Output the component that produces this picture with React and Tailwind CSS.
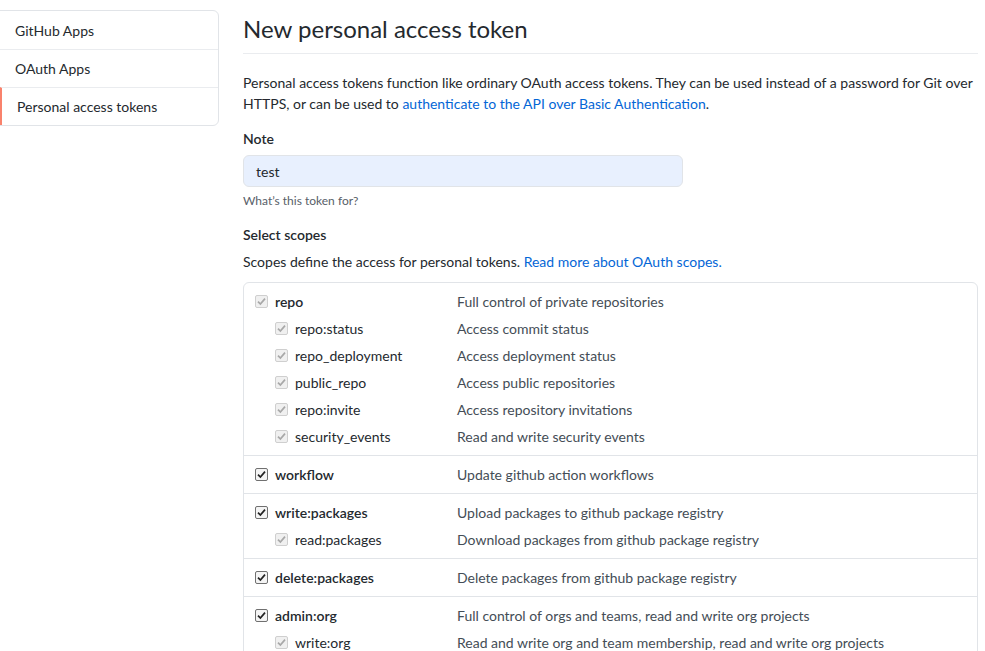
import React from "react";

const scopeGroups = [
  {
    items: [
      { name: "repo", desc: "Full control of private repositories", top: true, disabled: true },
      { name: "repo:status", desc: "Access commit status" },
      { name: "repo_deployment", desc: "Access deployment status" },
      { name: "public_repo", desc: "Access public repositories" },
      { name: "repo:invite", desc: "Access repository invitations" },
      { name: "security_events", desc: "Read and write security events" },
    ],
  },
  { items: [{ name: "workflow", desc: "Update github action workflows", top: true }] },
  {
    items: [
      { name: "write:packages", desc: "Upload packages to github package registry", top: true },
      { name: "read:packages", desc: "Download packages from github package registry" },
    ],
  },
  { items: [{ name: "delete:packages", desc: "Delete packages from github package registry", top: true }] },
  {
    items: [
      { name: "admin:org", desc: "Full control of orgs and teams, read and write org projects", top: true },
      { name: "write:org", desc: "Read and write org and team membership, read and write org projects" },
      { name: "read:org", desc: "Read org and team membership, read org projects" },
    ],
  },
];

function Checkbox({ disabled }) {
  return (
    <span
      className={
        "flex h-[13px] w-[13px] shrink-0 items-center justify-center rounded-[2px] border " +
        (disabled ? "border-[#cfcfcf] bg-[#f0f0f0]" : "border-[#707070] bg-[#f4f4f4]")
      }
    >
      <svg width="9" height="9" viewBox="0 0 9 9">
        <path
          d="M1 4.6 L3.4 7 L8 1.6"
          fill="none"
          stroke={disabled ? "#a8a8a8" : "#222"}
          strokeWidth="1.7"
        />
      </svg>
    </span>
  );
}

export default function App() {
  const menu = ["GitHub Apps", "OAuth Apps", "Personal access tokens"];

  return (
    <div
      className="flex h-[651px] overflow-hidden bg-white text-[14px] text-[#24292e]"
      style={{ fontFamily: 'Lato, "Open Sans", sans-serif' }}
    >
      <div className="w-[243px] shrink-0 pt-[10px]">
        <nav className="ml-[-1px] w-[220px] rounded-r-[6px] border border-[#e1e4e8]">
          {menu.map((label, i) => (
            <div
              key={label}
              className={
                "flex h-[38px] items-center pl-[15px] " +
                (i > 0 ? "border-t border-[#eaecef] " : "") +
                (i === 2 ? "border-l-2 border-l-[#f9826c] pl-[13px]" : "")
              }
            >
              {label}
            </div>
          ))}
        </nav>
      </div>

      <main className="w-[735px] shrink-0">
        <h1 className="mt-[13px] border-b border-[#eaecef] pb-[8px] text-[24px] leading-[32px] font-normal">
          New personal access token
        </h1>

        <p className="mt-[18px] leading-[21px]">
          Personal access tokens function like ordinary OAuth access tokens. They can be used instead of a
          password for Git over HTTPS, or can be used to{" "}
          <a className="text-[#0366d6]">authenticate to the API over Basic Authentication</a>.
        </p>

        <div className="mt-[14px] font-semibold leading-[21px]">Note</div>
        <div className="mt-[6px] flex h-[32px] w-[440px] items-center rounded-[6px] border border-[#e1e4e8] bg-[#e8f0fe] px-[12px]">
          test
        </div>
        <div className="mt-[5px] text-[12px] leading-[18px] text-[#586069]">What’s this token for?</div>

        <div className="mt-[14px] font-semibold leading-[21px]">Select scopes</div>
        <p className="mt-[6px] leading-[21px]">
          Scopes define the access for personal tokens.{" "}
          <a className="text-[#0366d6]">Read more about OAuth scopes.</a>
        </p>

        <div className="mt-[10px] rounded-t-[6px] border border-[#e1e4e8]">
          {scopeGroups.map((group, gi) => (
            <div key={gi} className={"py-[5px] " + (gi > 0 ? "border-t border-[#e1e4e8]" : "")}>
              {group.items.map((item) => (
                <div key={item.name} className="flex h-[27px] items-center">
                  <div
                    className={
                      "flex w-[213px] items-center gap-[8px] " +
                      (item.top ? "pl-[11px] font-semibold" : "pl-[31px]")
                    }
                  >
                    <Checkbox disabled={item.disabled || !item.top} />
                    <span className="ml-[-1px]">{item.name}</span>
                  </div>
                  <div className="whitespace-nowrap text-[#444d56]">{item.desc}</div>
                </div>
              ))}
            </div>
          ))}
        </div>
      </main>
    </div>
  );
}
